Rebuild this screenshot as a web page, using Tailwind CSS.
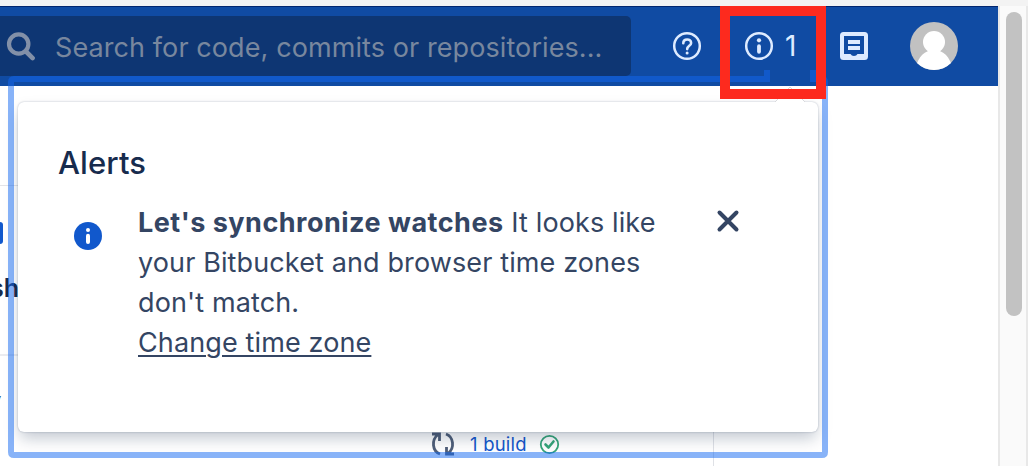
<!DOCTYPE html>
<html lang="en">
<head>
<meta charset="utf-8">
<title>Bitbucket</title>
<script src="https://cdn.jsdelivr.net/npm/@tailwindcss/browser@4"></script>
</head>
<body class="relative flex h-[466px] w-[1028px] flex-col overflow-hidden bg-white font-['Inter',sans-serif] text-[#344563]">
  <div class="h-1.5 shrink-0 bg-[#f3f3f3]"></div>
  <div class="flex min-h-0 flex-1">
    <div class="flex w-[998px] flex-col">
      <header class="flex h-20 shrink-0 items-start border-t border-[#02266f] bg-[#104ba3] pt-[9px]">
        <div class="flex h-[60px] w-[631px] items-center rounded-r-[5px] bg-[#0e3673] pl-[6px]">
          <svg class="size-[30px] shrink-0" viewBox="0 0 30 30" fill="none" stroke="#8290a8" stroke-linecap="round"><circle cx="12.7" cy="13" r="9.7" stroke-width="4.2"/><path d="M20 20.5l6.6 6.6" stroke-width="4.6"/></svg>
          <span class="ml-[19px] mt-[3px] whitespace-nowrap text-[27px] leading-8 tracking-[0.09px] text-[#78879e]">Search for code, commits or repositories...</span>
        </div>
        <div class="flex h-[60px] items-center">
          <svg class="ml-[41px] size-[30px]" viewBox="0 0 30 30" fill="none" stroke="#deebff"><circle cx="15" cy="15" r="12.8" stroke-width="2.5"/><path d="M11.3 12.2c0-4.900 7.800-4.900 7.800-.3 0 3-3.900 2.900-3.900 6.200" stroke-width="2.6" stroke-linecap="round"/><circle cx="15.1" cy="22" r="1.5" fill="#deebff" stroke="none"/></svg>
          <svg class="ml-[42px] size-[30px]" viewBox="0 0 30 30" fill="none" stroke="#deebff"><circle cx="15" cy="15" r="12.8" stroke-width="2.5"/><path d="M15 15.2v5.600" stroke-width="3.8" stroke-linecap="round"/><circle cx="15" cy="9.3" r="2.1" fill="#deebff" stroke="none"/></svg>
          <span class="ml-[11px] w-4 text-[28px] leading-8 text-[#deebff]">1</span>
          <svg class="ml-[38px] size-[30px]" viewBox="0 0 30 30"><path fill="#deebff" fill-rule="evenodd" d="M4.500 1h21Q29 1 29 4.500v21Q29 29 25.500 29h-21Q1 29 1 25.500v-21Q1 1 4.500 1ZM5 5v18h6.500q1 2 3.500 2t3.500-2H25V5Z"/><path fill="#deebff" d="M9 9h12v4H9zM9 15h12v4H9z"/></svg>
          <svg class="ml-[41px] size-12" viewBox="0 0 48 48"><clipPath id="avatar"><circle cx="24" cy="24" r="24"/></clipPath><g clip-path="url(#avatar)"><path fill="#c1c1c1" d="M0 0h48v48H0z"/><circle cx="24" cy="20" r="11" fill="#fff"/><path fill="#fff" d="M5 48C8 34 15 28 24 28s16 6 19 20z"/></g></svg>
        </div>
      </header>
      <main class="relative flex-1 overflow-hidden">
        <div class="flex h-full flex-col">
          <div class="h-[100px] w-[714px] shrink-0 border-b border-[#e3e4e8]"></div>
          <div class="mt-9 h-[22px] w-[3px] shrink-0 rounded-r-[3px] bg-[#1158cc]"></div>
          <div class="ml-[-10px] mt-[26px] h-9 text-[25px] leading-9 font-semibold text-[#172b4d]">sh</div>
          <div class="mt-[48px] w-[714px] border-b-2 border-[#ebecf0]"></div>
          <div class="-ml-3 mt-[29px] h-8 text-[24px] leading-8">y</div>
          <div class="mt-[9px] flex h-9 items-center pl-[431px]">
            <svg class="size-6" viewBox="0 0 24 24" fill="none" stroke="#505f79" stroke-width="2.8"><path d="M9 22C1 19 .500 8 6.500 3M1 2h7.500v7M15 2c8 3 8.500 14 2.500 19M23 22h-7.500v-7"/></svg>
            <span class="ml-[15px] whitespace-nowrap text-[18.5px] leading-6 tracking-[0.2px] text-[#1558cc]">1 build</span>
          </div>
        </div>
        <svg class="absolute left-[539px] top-[348px] size-[21px]" viewBox="0 0 21 21" fill="none" stroke="#36a579"><circle cx="10.500" cy="10.500" r="8.700" stroke-width="1.800"/><path d="M6.500 10.500l3 3 5-6" stroke-width="2.600" stroke-linecap="round" stroke-linejoin="round"/></svg>
        <div class="absolute bottom-0 left-[713px] h-[60px] w-px bg-[#dfe1e6]"></div>
      </main>
    </div>
    <div class="flex w-[30px] border-x-2 border-[#e8e8e8] bg-[#fafafa] pl-[6px] pt-[6px]">
      <div class="h-[304px] w-4 rounded-full bg-[#c2c2c2]"></div>
    </div>
  </div>

  <section class="absolute left-[18px] top-[102px] h-[330px] w-[800px] rounded-[6px] bg-white px-10 pt-[41px] shadow-[0_0_2px_rgba(9,30,66,0.3),0_8px_16px_-2px_rgba(9,30,66,0.25)]">
    <h2 class="text-[31px] leading-10 font-medium tracking-[0.1px] text-[#172b4d]">Alerts</h2>
    <div class="mt-[20px] flex items-start">
      <svg class="ml-[16px] mt-[19px] size-7 shrink-0" viewBox="0 0 28 28"><circle cx="14" cy="14" r="14" fill="#1158cc"/><circle cx="14" cy="8" r="2" fill="#fff"/><path d="M14 13.700v6.300" stroke="#fff" stroke-width="4" stroke-linecap="round"/></svg>
      <p class="ml-[36px] w-[560px] whitespace-nowrap text-[27px] leading-10 tracking-[0.12px]"><b class="font-bold tracking-[0.5px]">Let's synchronize watches</b> It looks like<br>your Bitbucket and browser time zones<br>don't match.<br><span class="underline decoration-2 underline-offset-[3px]">Change time zone</span></p>
      <svg class="ml-[18px] mt-[6px] size-6 shrink-0" viewBox="0 0 24 24" stroke="#344563" stroke-width="4" stroke-linecap="round"><path d="M3.500 3.500l17 17M20.500 3.500l-17 17"/></svg>
    </div>
  </section>
  <svg class="absolute left-[774px] top-[85px] h-[18px] w-8" viewBox="0 0 32 18"><path d="M1 17L16 2l15 15v1H1z" fill="#fff"/><path d="M1 17L16 2l15 15" fill="none" stroke="#d9dadd"/></svg>
  <svg class="absolute inset-0 h-[466px] w-[1028px]" viewBox="0 0 1028 466" fill="none"><path d="M767 70v9H14q-3 0-3 3v370q0 3 3 3h808q3 0 3-3V82q0-3-3-3h-9v-9" stroke="#1167f1" stroke-opacity=".5" stroke-width="6"/></svg>
  <div class="absolute left-[720px] top-1.5 h-[93px] w-[106px] border-10 border-[#fd2a1e]"></div>
</body>
</html>
